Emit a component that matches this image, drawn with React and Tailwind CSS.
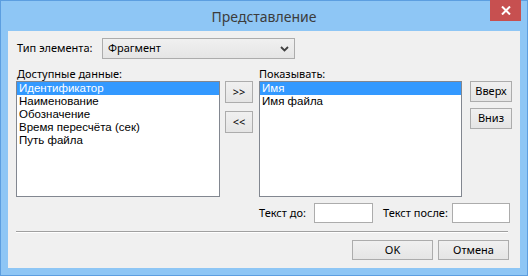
import React from "react";

const font = { fontFamily: '"Noto Sans", "Open Sans", sans-serif' };

function Btn({ children, className = "" }) {
  return (
    <div
      className={
        "flex items-center justify-center border border-[#acacac] bg-gradient-to-b from-[#f0f0f0] to-[#e5e5e5] text-[11px] text-black whitespace-nowrap " +
        className
      }
    >
      {children}
    </div>
  );
}

function ListBox({ items, selected }) {
  return (
    <div className="h-[116px] w-full border border-[#828790] bg-white font-['Liberation_Sans',Arial,sans-serif] text-[11.5px] leading-[13px] text-black">
      {items.map((t, i) => (
        <div
          key={t}
          className={
            "h-[13px] pl-[2px] whitespace-nowrap " +
            (i === selected ? "bg-[#3399ff] text-white" : "")
          }
        >
          {t}
        </div>
      ))}
    </div>
  );
}

export default function App() {
  return (
    <div
      className="w-[528px] h-[276px] border border-[#5c9ee0] bg-[#8ec6f5] flex flex-col"
      style={font}
    >
      <div className="relative h-[30px] flex items-center justify-center">
        <span className="text-[14px] text-[#3c3c3c] pt-[1px]">Представление</span>
        <div className="absolute right-[6px] top-[-1px] w-[31px] h-[21px] bg-[#c75050] flex items-center justify-center">
          <svg width="10" height="9" viewBox="0 0 10 9">
            <path d="M1 0.5 L9 8.5 M9 0.5 L1 8.5" stroke="white" strokeWidth="2" />
          </svg>
        </div>
      </div>
      <div className="mx-[7px] h-[237px] bg-[#f0f0f0] pl-[8px] pt-[7px] flex flex-col text-[11px] text-black whitespace-nowrap">
        <div className="flex items-center h-[21px]">
          <div className="w-[86px] pl-[1px]">Тип элемента:</div>
          <div className="w-[193px] h-[21px] border border-[#acacac] bg-gradient-to-b from-[#f0f0f0] to-[#e5e5e5] flex items-center justify-between pl-[5px] pr-[5px]">
            <span>Фрагмент</span>
            <svg width="9" height="6" viewBox="0 0 9 6">
              <path d="M1 1 L4.5 4.5 L8 1" stroke="#404040" strokeWidth="1.8" fill="none" />
            </svg>
          </div>
        </div>
        <div className="flex mt-[8px]">
          <div className="w-[204px] flex flex-col">
            <div className="h-[14px] leading-[14px] pl-[1px]">Доступные данные:</div>
            <ListBox
              items={[
                "Идентификатор",
                "Наименование",
                "Обозначение",
                "Время пересчёта (сек)",
                "Путь файла",
              ]}
              selected={0}
            />
          </div>
          <div className="ml-[5px] w-[28px] pt-[14px] flex flex-col gap-[8px]">
            <Btn className="h-[22px]">&gt;&gt;</Btn>
            <Btn className="h-[22px]">&lt;&lt;</Btn>
          </div>
          <div className="ml-[6px] w-[203px] flex flex-col">
            <div className="h-[14px] leading-[14px]">Показывать:</div>
            <ListBox items={["Имя", "Имя файла"]} selected={0} />
          </div>
          <div className="ml-[8px] w-[42px] pt-[14px] flex flex-col gap-[6px]">
            <Btn className="h-[21px]">Вверх</Btn>
            <Btn className="h-[21px]">Вниз</Btn>
          </div>
        </div>
        <div className="flex items-center mt-[6px] ml-[243px] h-[20px]">
          <div className="w-[55px]">Текст до:</div>
          <div className="w-[59px] h-[20px] border border-[#acacac] bg-white" />
          <div className="ml-[10px] w-[69px]">Текст после:</div>
          <div className="w-[58px] h-[20px] border border-[#acacac] bg-white" />
        </div>
        <div className="mt-[8px] w-[492px] h-[2px] border-t border-[#a0a0a0] border-b border-b-white" />
        <div className="flex mt-[7px] ml-[336px] gap-[5px]">
          <Btn className="w-[81px] h-[20px] border-[#3399ff]">OK</Btn>
          <Btn className="w-[71px] h-[20px]">Отмена</Btn>
        </div>
      </div>
    </div>
  );
}
